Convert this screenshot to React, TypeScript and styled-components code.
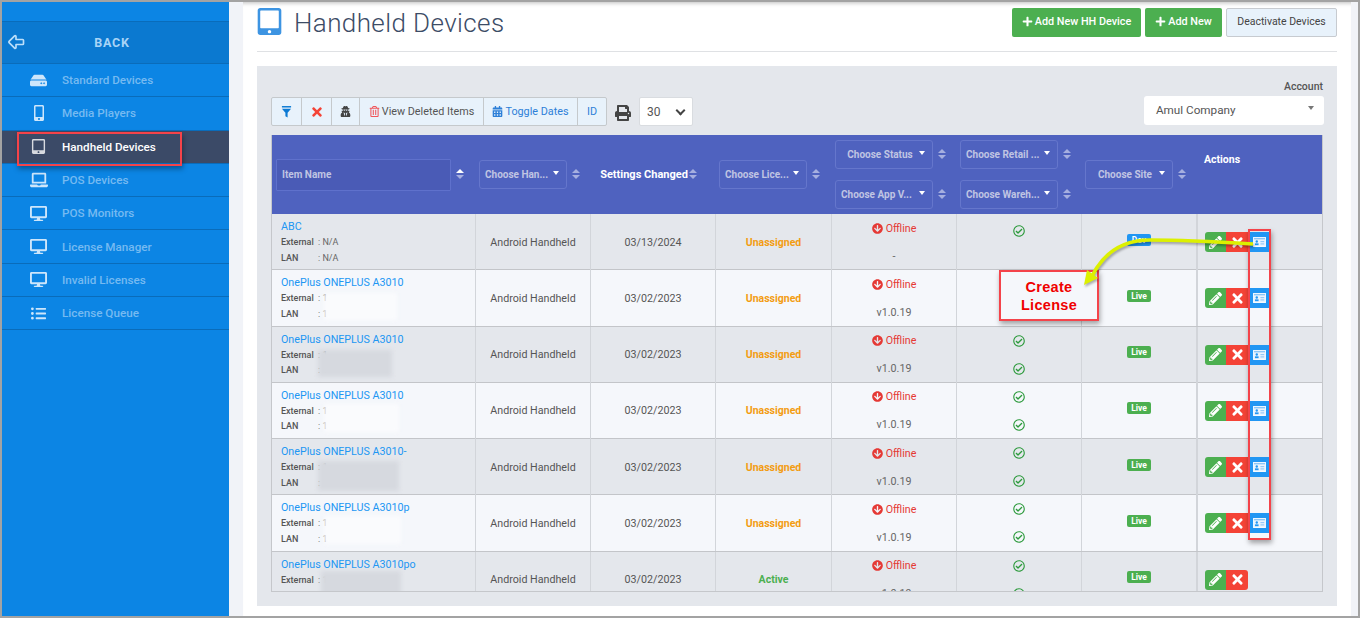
import React from "react";
import styled, { createGlobalStyle } from "styled-components";
import {
  FaArrowCircleDown,
  FaCalendarAlt,
  FaDesktop,
  FaHdd,
  FaLaptop,
  FaListUl,
  FaMobileAlt,
  FaPencilAlt,
  FaPlus,
  FaPrint,
  FaRegCheckCircle,
  FaRegTrashAlt,
  FaTabletAlt,
  FaTimes,
  FaUserSecret,
} from "react-icons/fa";
import { TbArrowBigLeft } from "react-icons/tb";

const COLUMNS = "204px 115px 125px 116px 125px 125px 116px 126px";

const navItems = [
  { label: "Standard Devices", icon: <FaHdd size={17} /> },
  { label: "Media Players", icon: <FaMobileAlt size={16} /> },
  { label: "Handheld Devices", icon: <FaTabletAlt size={15} />, active: true },
  { label: "POS Devices", icon: <FaLaptop size={18} /> },
  { label: "POS Monitors", icon: <FaDesktop size={17} /> },
  { label: "License Manager", icon: <FaDesktop size={17} /> },
  { label: "Invalid Licenses", icon: <FaDesktop size={17} /> },
  { label: "License Queue", icon: <FaListUl size={15} /> },
];

type Device = {
  name: string;
  date: string;
  license: string;
  version: string;
  env: string;
  checks: number;
  card: boolean;
  patch?: { left: number; top: number; w: number; h: number };
};

const devices: Device[] = [
  { name: "ABC", date: "03/13/2024", license: "Unassigned", version: "-", env: "Dev", checks: 1, card: true },
  { name: "OnePlus ONEPLUS A3010", date: "03/02/2023", license: "Unassigned", version: "v1.0.19", env: "Live", checks: 2, card: true, patch: { left: 52, top: 23, w: 73, h: 27 } },
  { name: "OnePlus ONEPLUS A3010", date: "03/02/2023", license: "Unassigned", version: "v1.0.19", env: "Live", checks: 2, card: true, patch: { left: 46, top: 23, w: 74, h: 27 } },
  { name: "OnePlus ONEPLUS A3010", date: "03/02/2023", license: "Unassigned", version: "v1.0.19", env: "Live", checks: 2, card: true, patch: { left: 52, top: 21, w: 75, h: 28 } },
  { name: "OnePlus ONEPLUS A3010-", date: "03/02/2023", license: "Unassigned", version: "v1.0.19", env: "Live", checks: 2, card: true, patch: { left: 46, top: 22, w: 81, h: 30 } },
  { name: "OnePlus ONEPLUS A3010p", date: "03/02/2023", license: "Unassigned", version: "v1.0.19", env: "Live", checks: 2, card: true, patch: { left: 52, top: 21, w: 77, h: 28 } },
  { name: "OnePlus ONEPLUS A3010po", date: "03/02/2023", license: "Active", version: "v1.0.19", env: "Live", checks: 2, card: false, patch: { left: 49, top: 19, w: 80, h: 26 } },
];

const GlobalStyle = createGlobalStyle`
  html, body {
    margin: 0;
    height: 618px;
    overflow: hidden;
    background: #fff;
    font-family: Roboto, "Liberation Sans", sans-serif;
  }
  * { box-sizing: border-box; }
`;

const Frame = styled.div`
  position: relative;
  display: flex;
  width: 1360px;
  height: 618px;
  border: 2px solid #a3a3a3;
  background: #f1f3f8;
  overflow: hidden;
`;

const Sidebar = styled.nav`
  flex: none;
  width: 227px;
  padding-top: 19px;
  background: #0c85e4;
`;

const BackRow = styled.div`
  position: relative;
  display: flex;
  align-items: center;
  justify-content: center;
  height: 43px;
  padding-right: 7px;
  background: #0b79d0;
  border-top: 1px solid #0a6cba;
  border-bottom: 1px solid #0a6cba;
  color: #a9d4f6;
  font-size: 12.5px;
  font-weight: 700;
  letter-spacing: 0.8px;
  svg {
    position: absolute;
    left: 4px;
    top: 10px;
    color: #bcdffa;
  }
`;

const NavItem = styled.div<{ $active?: boolean }>`
  display: flex;
  align-items: center;
  height: 33.3px;
  border-bottom: 1px solid #0a6cba;
  background: ${(p) => (p.$active ? "#3b4a67" : "transparent")};
  color: ${(p) => (p.$active ? "#fff" : "#76baf1")};
  font-size: 11.7px;
  font-weight: 500;
`;

const NavIcon = styled.span<{ $active?: boolean }>`
  display: flex;
  justify-content: center;
  width: 60px;
  padding-left: 13px;
  color: ${(p) => (p.$active ? "#d7dae0" : "#cde6fb")};
`;

const Main = styled.main`
  flex: none;
  width: 1108px;
  height: 614px;
  margin-left: 14px;
  padding: 0 14px;
  background: #fff;
  box-shadow: inset 0 5px 4px -4px #bdbdbd;
`;

const PageHead = styled.header`
  display: flex;
  justify-content: space-between;
  height: 50px;
  border-bottom: 1px solid #dfe1e4;
`;

const TitleWrap = styled.div`
  display: flex;
  align-items: flex-start;
  gap: 11px;
  padding-top: 5px;
  color: #3d94e2;
  svg {
    margin: 1px 0 0 -1px;
  }
`;

const Title = styled.h1`
  margin: 0;
  color: #3c4c66;
  font-size: 26px;
  font-weight: 300;
  line-height: 33px;
  letter-spacing: 0.4px;
`;

const HeadActions = styled.div`
  display: flex;
  align-items: flex-start;
  gap: 4px;
  padding-top: 6px;
`;

const GreenButton = styled.button<{ $w: number }>`
  display: flex;
  align-items: center;
  justify-content: center;
  gap: 2px;
  width: ${(p) => p.$w}px;
  height: 29px;
  padding: 0 0 3px;
  border: 0;
  border-radius: 2px;
  background: #4caf50;
  color: #fff;
  font-family: inherit;
  font-size: 10.8px;
  font-weight: 500;
`;

const PlainButton = styled.button`
  width: 111px;
  height: 29px;
  padding: 0 0 3px;
  border: 1px solid #c7cbd0;
  border-radius: 2px;
  background: #e8f2fb;
  color: #444;
  font-family: inherit;
  font-size: 10.5px;
`;

const Panel = styled.section`
  height: 540px;
  margin-top: 14px;
  padding: 14px 14px 0;
  background: #e4e7ec;
`;

const PanelTop = styled.div`
  display: flex;
  justify-content: space-between;
  align-items: flex-end;
  height: 46px;
`;

const Toolbar = styled.div`
  display: flex;
  align-items: center;
`;

const ToolGroup = styled.div`
  display: flex;
  height: 29px;
  border: 1px solid #c5c9cc;
  border-radius: 2px;
  background: #e8f2fb;
`;

const ToolButton = styled.span<{ $w: number; $color: string }>`
  display: flex;
  align-items: center;
  justify-content: center;
  gap: 2px;
  width: ${(p) => p.$w}px;
  border-left: 1px solid #c5c9cc;
  color: ${(p) => p.$color};
  font-size: 10.8px;
  &:first-child {
    border-left: 0;
  }
`;

const TrashIcon = styled(FaRegTrashAlt)`
  color: #f0555a;
`;

const PrintWrap = styled.span`
  display: flex;
  margin: 3px 8px 0 8px;
  color: #444;
`;

const PageSize = styled.div`
  display: flex;
  align-items: center;
  justify-content: space-between;
  width: 54px;
  height: 29px;
  padding: 0 7px;
  border: 1px solid #d9dce0;
  border-radius: 2px;
  background: #fff;
  color: #555;
  font-size: 12px;
`;

const Chevron = styled.span`
  width: 7px;
  height: 7px;
  margin: -3px 1px 0 0;
  border-right: 2px solid #444;
  border-bottom: 2px solid #444;
  transform: rotate(45deg);
`;

const AccountBox = styled.div`
  display: flex;
  flex-direction: column;
  align-items: flex-end;
  gap: 3px;
  margin: 0 -1px 1px 0;
`;

const AccountLabel = styled.label`
  margin-right: 1px;
  color: #555;
  font-size: 10.5px;
  font-weight: 500;
`;

const AccountSelect = styled.div`
  display: flex;
  align-items: center;
  justify-content: space-between;
  width: 180px;
  height: 29px;
  padding: 0 10px 2px 12px;
  border-radius: 3px;
  background: #fff;
  color: #555;
  font-size: 11.7px;
`;

const SmallCaret = styled.span<{ $color: string }>`
  flex: none;
  width: 0;
  height: 0;
  margin-top: -3px;
  border-left: 3.5px solid transparent;
  border-right: 3.5px solid transparent;
  border-top: 4.5px solid ${(p) => p.$color};
`;

const TableClip = styled.div`
  height: 457px;
  margin-top: 9px;
  border-left: 1px solid #c5c7cb;
  border-right: 1px solid #c5c7cb;
  border-bottom: 1px solid #c5c7cb;
  overflow: hidden;
`;

const HeadRow = styled.div`
  display: grid;
  grid-template-columns: ${COLUMNS};
  height: 79px;
  margin-left: -1px;
  padding-bottom: 1px;
  background: #4f62bf;
`;

const HeadCell = styled.div`
  display: flex;
  flex-direction: column;
  justify-content: center;
  gap: 11px;
  padding-left: 4px;
`;

const FilterLine = styled.div<{ $nudge?: number }>`
  display: flex;
  align-items: center;
  gap: 5px;
  margin-left: ${(p) => p.$nudge ?? 0}px;
`;

const FilterBox = styled.div<{ $w: number; $tall?: boolean }>`
  display: flex;
  align-items: center;
  width: ${(p) => p.$w}px;
  height: ${(p) => (p.$tall ? 32 : 29)}px;
  margin-top: ${(p) => (p.$tall ? 1 : 0)}px;
  padding: 0 7px 0 5px;
  border: 1px solid ${(p) => (p.$tall ? "#5f71cc" : "#6576cc")};
  border-radius: ${(p) => (p.$tall ? 1 : 3)}px;
  background: ${(p) => (p.$tall ? "#4a5bb6" : "#4f62bf")};
  color: #c0c5e3;
  font-size: 10px;
  font-weight: 700;
`;

const FilterText = styled.span<{ $center?: boolean }>`
  flex: 1;
  text-align: ${(p) => (p.$center ? "center" : "left")};
  white-space: nowrap;
`;

const SortArrows = styled.span<{ $on?: boolean }>`
  display: inline-flex;
  flex-direction: column;
  gap: 2px;
  &::before,
  &::after {
    content: "";
    width: 0;
    height: 0;
    border-left: 4px solid transparent;
    border-right: 4px solid transparent;
  }
  &::before {
    border-bottom: 4px solid ${(p) => (p.$on ? "#fff" : "#a6afe0")};
  }
  &::after {
    border-top: 4px solid #a6afe0;
  }
`;

const HeadTitle = styled.div`
  display: flex;
  align-items: center;
  justify-content: center;
  gap: 1px;
  padding-right: 12px;
  color: #fff;
  font-size: 11px;
  font-weight: 700;
`;

const ActionsTitle = styled.div`
  margin: -30px 0 0 3px;
  color: #fff;
  font-size: 10.5px;
  font-weight: 700;
`;

const Row = styled.div<{ $even: boolean }>`
  display: grid;
  grid-template-columns: ${COLUMNS};
  height: 56.3px;
  margin-left: -1px;
  background: ${(p) => (p.$even ? "#f5f7fb" : "#e4e7ec")};
  border-bottom: 1px solid #c3c5c9;
  border-left: 1px solid #c5c7cb;
`;

const Cell = styled.div<{ $heavy?: boolean }>`
  display: flex;
  flex-direction: column;
  align-items: center;
  justify-content: center;
  border-right: ${(p) => (p.$heavy ? 2 : 1)}px solid #d2d5da;
  color: #555;
  font-size: 10.7px;
`;

const NameCell = styled.div`
  position: relative;
  padding: 6px 0 0 9px;
  border-right: 1px solid #d2d5da;
  color: #666;
  font-size: 9px;
`;

const DeviceName = styled.a`
  display: block;
  color: #2196f3;
  font-size: 10.7px;
  line-height: 14px;
  margin-bottom: 1px;
`;

const MetaLine = styled.div`
  height: 15.5px;
  line-height: 15.5px;
`;

const MetaLabel = styled.b`
  display: inline-block;
  width: 37px;
  color: #555;
  font-weight: 500;
`;

const BlurPatch = styled.span<{ $left: number; $top: number; $w: number; $h: number; $even: boolean }>`
  position: absolute;
  left: ${(p) => p.$left}px;
  top: ${(p) => p.$top}px;
  width: ${(p) => p.$w}px;
  height: ${(p) => p.$h}px;
  background: ${(p) => (p.$even ? "#fafbfd" : "#d6d9df")};
  filter: blur(2px);
`;

const License = styled.b<{ $active: boolean }>`
  color: ${(p) => (p.$active ? "#4caf50" : "#f39c12")};
  font-size: 10.5px;
  font-weight: 700;
`;

const StackCell = styled(Cell)`
  justify-content: flex-start;
`;

const StackLine = styled.div`
  display: flex;
  align-items: center;
  justify-content: center;
  gap: 3px;
  height: 28px;
  color: #666;
`;

const OfflineLine = styled(StackLine)`
  color: #e53935;
`;

const CheckLine = styled(StackLine)<{ $single?: boolean }>`
  margin-top: ${(p) => (p.$single ? 3 : 0)}px;
  color: #2c9a3c;
`;

const EnvBadge = styled.span<{ $dev: boolean }>`
  margin-bottom: 5px;
  width: 24px;
  height: 12px;
  border-radius: 2px;
  background: ${(p) => (p.$dev ? "#2196f3" : "#4caf50")};
  color: #fff;
  font-size: 8.5px;
  font-weight: 700;
  line-height: 12px;
  text-align: center;
`;

const ActionCell = styled.div`
  display: flex;
  align-items: flex-start;
  padding: 18px 0 0 7px;
`;

const IconButton = styled.span<{ $bg: string; $w: number; $first?: boolean; $last?: boolean }>`
  display: flex;
  align-items: center;
  justify-content: center;
  width: ${(p) => p.$w}px;
  height: 20px;
  background: ${(p) => p.$bg};
  color: #fff;
  border-radius: ${(p) => (p.$first ? "3px 0 0 3px" : p.$last ? "0 3px 3px 0" : "0")};
`;

const Marker = styled.div<{ $left: number; $top: number; $w: number; $h: number }>`
  position: absolute;
  left: ${(p) => p.$left}px;
  top: ${(p) => p.$top}px;
  width: ${(p) => p.$w}px;
  height: ${(p) => p.$h}px;
  border: 2px solid #f4434a;
  box-shadow: 1px 3px 5px rgba(0, 0, 0, 0.35);
`;

const Callout = styled(Marker)`
  display: flex;
  align-items: center;
  justify-content: center;
  background: #f5f7fb;
  color: #f00000;
  font-family: "Liberation Sans", Arial, sans-serif;
  font-size: 14.5px;
  font-weight: 700;
  letter-spacing: 0.3px;
  line-height: 18px;
  text-align: center;
`;

const ArrowLayer = styled.svg`
  position: absolute;
  left: 0;
  top: 0;
  filter: drop-shadow(1px 2px 1px rgba(0, 0, 0, 0.3));
`;

function FunnelIcon() {
  return (
    <svg width="11" height="12" viewBox="0 0 12 13" fill="currentColor">
      <rect x="1" y="0" width="10" height="1.6" />
      <polygon points="1,3 11,3 7.2,7.4 7.2,12.5 4.8,11 4.8,7.4" />
    </svg>
  );
}

function IdCard() {
  return (
    <svg width="13" height="10" viewBox="0 0 14 11">
      <rect x="0.5" y="0.5" width="13" height="10" fill="#eaf4fe" stroke="#fff" />
      <rect x="1" y="1" width="12" height="1.6" fill="#8cc6f7" />
      <circle cx="4" cy="5" r="1.3" fill="#2196f3" />
      <rect x="2" y="7" width="4" height="2" fill="#2196f3" />
      <rect x="8" y="4.5" width="4.2" height="1.2" fill="#8cc6f7" />
      <rect x="8" y="7" width="4.2" height="1.2" fill="#8cc6f7" />
    </svg>
  );
}

function Filter({ label, w, center }: { label: string; w: number; center?: boolean }) {
  return (
    <FilterLine>
      <FilterBox $w={w}>
        <FilterText $center={center}>{label}</FilterText>
        <SmallCaret $color="#fff" />
      </FilterBox>
      <SortArrows />
    </FilterLine>
  );
}

function DeviceRow({ device, even }: { device: Device; even: boolean }) {
  return (
    <Row $even={even}>
      <NameCell>
        <DeviceName>{device.name}</DeviceName>
        <MetaLine>
          <MetaLabel>External</MetaLabel>: {device.patch ? "1" : "N/A"}
        </MetaLine>
        <MetaLine>
          <MetaLabel>LAN</MetaLabel>: {device.patch ? "1" : "N/A"}
        </MetaLine>
        {device.patch && (
          <BlurPatch
            $left={device.patch.left}
            $top={device.patch.top}
            $w={device.patch.w}
            $h={device.patch.h}
            $even={even}
          />
        )}
      </NameCell>
      <Cell>Android Handheld</Cell>
      <Cell>{device.date}</Cell>
      <Cell>
        <License $active={device.license === "Active"}>{device.license}</License>
      </Cell>
      <StackCell>
        <OfflineLine>
          <FaArrowCircleDown size={11} />
          Offline
        </OfflineLine>
        <StackLine>{device.version}</StackLine>
      </StackCell>
      <StackCell>
        <CheckLine $single={device.checks === 1}>
          <FaRegCheckCircle size={12} />
        </CheckLine>
        {device.checks === 2 && (
          <CheckLine>
            <FaRegCheckCircle size={12} />
          </CheckLine>
        )}
      </StackCell>
      <Cell $heavy>
        <EnvBadge $dev={device.env === "Dev"}>{device.env}</EnvBadge>
      </Cell>
      <ActionCell>
        <IconButton $bg="#4caf50" $w={21} $first>
          <FaPencilAlt size={13} />
        </IconButton>
        <IconButton $bg="#f44336" $w={22} $last={!device.card}>
          <FaTimes size={15} />
        </IconButton>
        {device.card && (
          <IconButton $bg="#2196f3" $w={22}>
            <IdCard />
          </IconButton>
        )}
      </ActionCell>
    </Row>
  );
}

export default function App() {
  return (
    <Frame>
      <GlobalStyle />
      <Sidebar>
        <BackRow>
          <TbArrowBigLeft size={20} />
          BACK
        </BackRow>
        {navItems.map((item) => (
          <NavItem key={item.label} $active={item.active}>
            <NavIcon $active={item.active}>{item.icon}</NavIcon>
            {item.label}
          </NavItem>
        ))}
      </Sidebar>
      <Main>
        <PageHead>
          <TitleWrap>
            <FaTabletAlt size={27} />
            <Title>Handheld Devices</Title>
          </TitleWrap>
          <HeadActions>
            <GreenButton $w={129}>
              <FaPlus size={11} />
              Add New HH Device
            </GreenButton>
            <GreenButton $w={77}>
              <FaPlus size={11} />
              Add New
            </GreenButton>
            <PlainButton>Deactivate Devices</PlainButton>
          </HeadActions>
        </PageHead>
        <Panel>
          <PanelTop>
            <Toolbar>
              <ToolGroup>
                <ToolButton $w={29} $color="#0c7ad4">
                  <FunnelIcon />
                </ToolButton>
                <ToolButton $w={30} $color="#f44336">
                  <FaTimes size={14} />
                </ToolButton>
                <ToolButton $w={28} $color="#444">
                  <FaUserSecret size={11} />
                </ToolButton>
                <ToolButton $w={124} $color="#555">
                  <TrashIcon size={11} />
                  View Deleted Items
                </ToolButton>
                <ToolButton $w={94} $color="#2d7fd8">
                  <FaCalendarAlt size={11} />
                  Toggle Dates
                </ToolButton>
                <ToolButton $w={29} $color="#2d7fd8">
                  ID
                </ToolButton>
              </ToolGroup>
              <PrintWrap>
                <FaPrint size={16} />
              </PrintWrap>
              <PageSize>
                30
                <Chevron />
              </PageSize>
            </Toolbar>
            <AccountBox>
              <AccountLabel>Account</AccountLabel>
              <AccountSelect>
                Amul Company
                <SmallCaret $color="#777" />
              </AccountSelect>
            </AccountBox>
          </PanelTop>
          <TableClip>
            <HeadRow>
              <HeadCell>
                <FilterLine $nudge={1}>
                  <FilterBox $w={175} $tall>
                    Item Name
                  </FilterBox>
                  <SortArrows $on />
                </FilterLine>
              </HeadCell>
              <HeadCell>
                <Filter label="Choose Han..." w={88} />
              </HeadCell>
              <HeadCell>
                <HeadTitle>
                  Settings Changed
                  <SortArrows />
                </HeadTitle>
              </HeadCell>
              <HeadCell>
                <Filter label="Choose Lice..." w={88} />
              </HeadCell>
              <HeadCell>
                <Filter label="Choose Status" w={98} center />
                <Filter label="Choose App V..." w={98} />
              </HeadCell>
              <HeadCell>
                <Filter label="Choose Retail ..." w={98} />
                <Filter label="Choose Wareh..." w={98} />
              </HeadCell>
              <HeadCell>
                <Filter label="Choose Site" w={88} center />
              </HeadCell>
              <HeadCell>
                <ActionsTitle>Actions</ActionsTitle>
              </HeadCell>
            </HeadRow>
            {devices.map((device, i) => (
              <DeviceRow key={i} device={device} even={i % 2 === 1} />
            ))}
          </TableClip>
        </Panel>
      </Main>
      <Marker $left={15} $top={130} $w={165} $h={34} />
      <Marker $left={1246} $top={227} $w={23} $h={311} />
      <Callout $left={997} $top={268} $w={100} $h={51}>
        Create
        <br />
        License
      </Callout>
      <ArrowLayer width="1356" height="614" viewBox="2 2 1356 614">
        <path
          d="M1253 244 C1220 242 1185 240 1150 240 C1120 240 1102 256 1092 276"
          fill="none"
          stroke="#dcf000"
          strokeWidth="3.5"
        />
        <polygon points="1084,285 1087,270 1098,278" fill="#dcf000" />
      </ArrowLayer>
    </Frame>
  );
}
